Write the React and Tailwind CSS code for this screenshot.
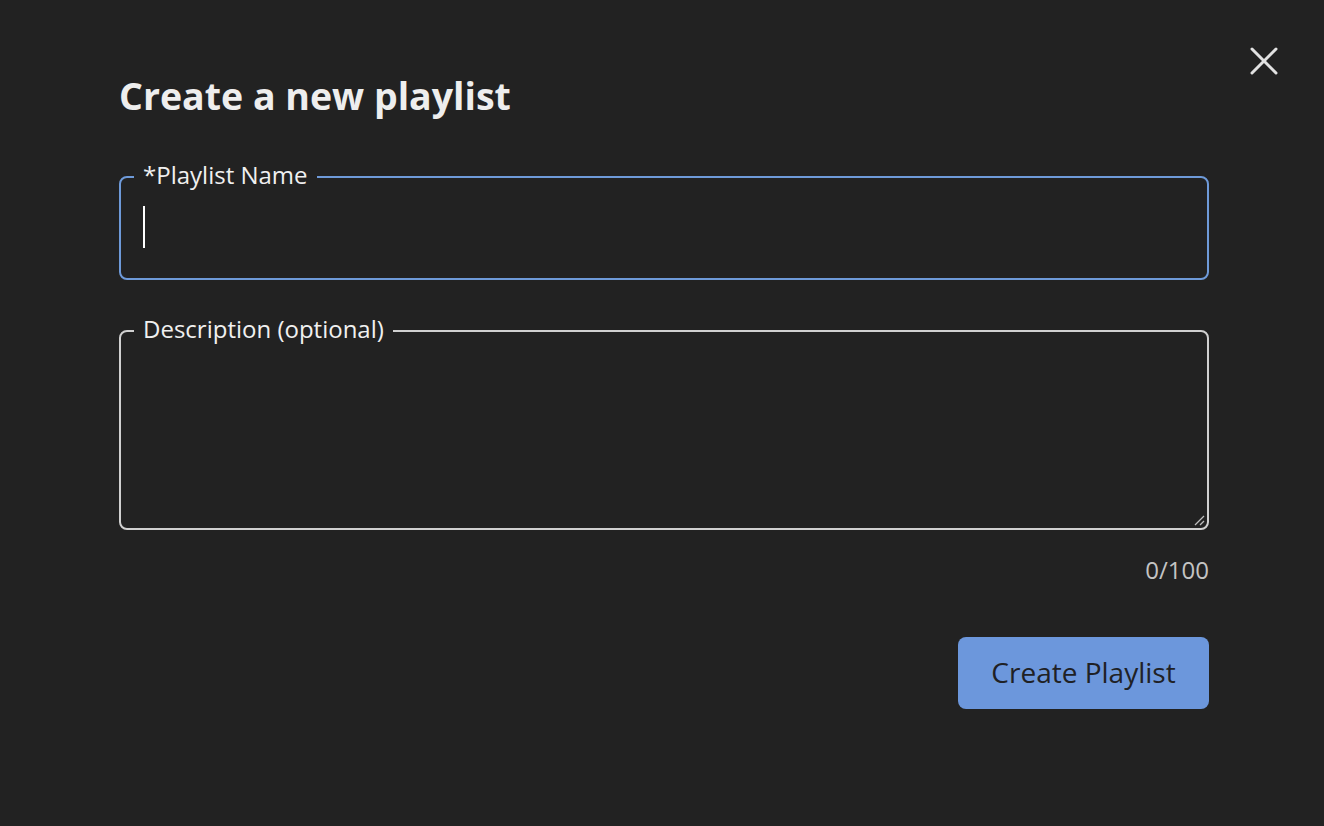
import React from 'react';

const font = { fontFamily: '"Open Sans", "Noto Sans", Lato, sans-serif' };

const OutlinedField = ({ label, focused, height, children, resizable }) => (
  <fieldset
    className={`relative rounded-lg border-2 pl-[13px] pr-4 ${focused ? 'border-[#6e9ad9]' : 'border-[#d0d0d0]'}`}
    style={{ height }}
  >
    <legend className="px-[9px] pb-[5px] text-[24px] leading-[27px] text-[#f0f0f0]">{label}</legend>
    {children}
    {resizable && (
      <svg className="absolute bottom-[2px] right-[2px]" width="12" height="12" viewBox="0 0 12 12">
        <line x1="2" y1="11" x2="11" y2="2" stroke="#bdbdbd" strokeWidth="1.3" />
        <line x1="7" y1="11" x2="11" y2="7" stroke="#bdbdbd" strokeWidth="1.3" />
      </svg>
    )}
  </fieldset>
);

const App = () => {
  return (
    <div className="relative min-h-[826px] w-full bg-[#222222]" style={font}>
      {/* close */}
      <button className="absolute right-[45px] top-[46px] h-[30px] w-[30px]">
        <svg width="30" height="30" viewBox="0 0 30 30">
          <line x1="3" y1="3" x2="27" y2="27" stroke="#e2e2e2" strokeWidth="3" strokeLinecap="round" />
          <line x1="27" y1="3" x2="3" y2="27" stroke="#e2e2e2" strokeWidth="3" strokeLinecap="round" />
        </svg>
      </button>

      <div className="ml-[119px] w-[1090px] pt-[73px]">
        <h1 className="text-[37.5px] font-bold leading-[46px] text-[#eeeeee]">Create a new playlist</h1>

        <div className="mt-[42px]">
          <OutlinedField label="*Playlist Name" focused height={119}>
            <div className="ml-[9px] mt-[13px] h-[42px] w-[2px] bg-white" />
          </OutlinedField>
        </div>

        <div className="mt-[35px]">
          <OutlinedField label="Description (optional)" height={215} resizable />
        </div>

        <div className="mt-[24px] text-right text-[24px] leading-[32px] text-[#c4c4c4]">0/100</div>

        <div className="mt-[51px] flex justify-end">
          <button className="flex h-[72px] w-[251px] items-center justify-center rounded-lg bg-[#6c97dc] pb-[3px] text-[28px] text-[#1f2125]">
            Create Playlist
          </button>
        </div>
      </div>
    </div>
  );
};

export default App;
